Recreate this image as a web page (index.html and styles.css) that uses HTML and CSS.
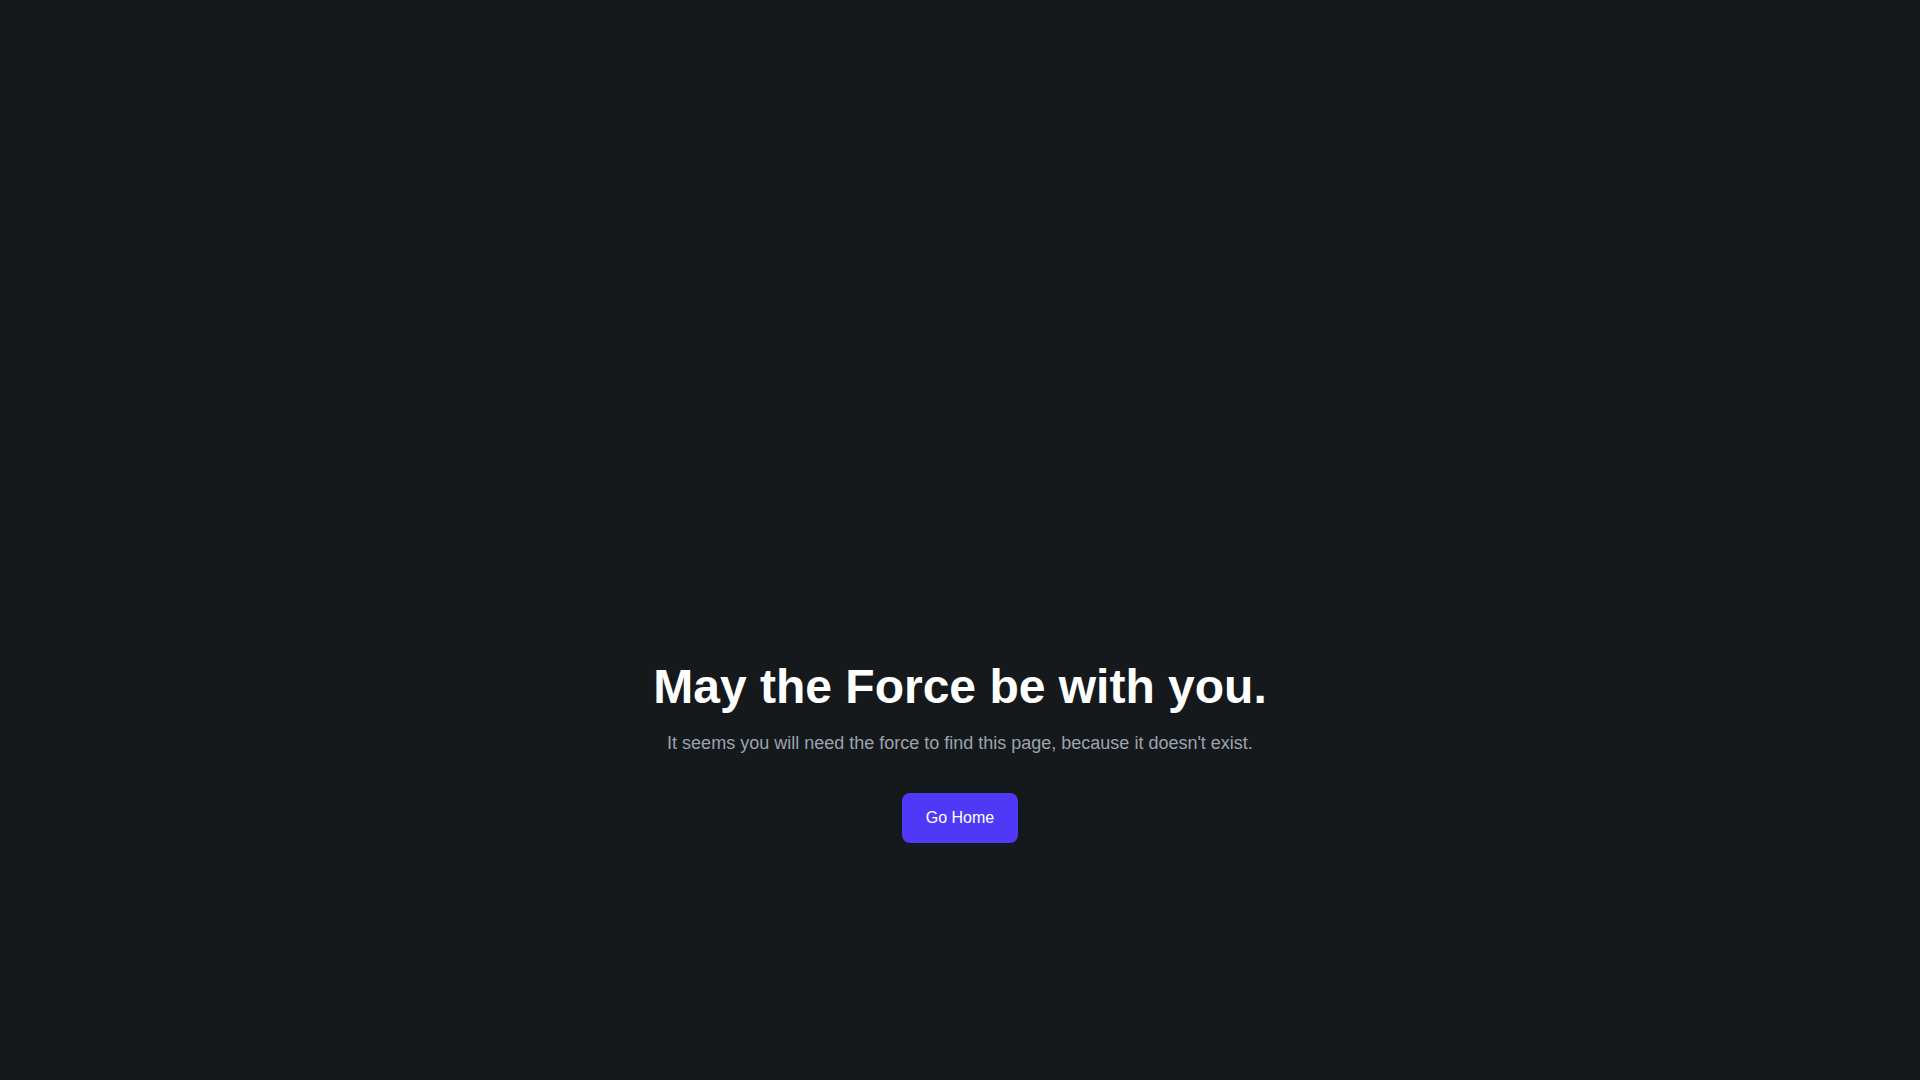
FILE: index.html
```html
<!DOCTYPE html>
<html lang="en">
<head>
<meta charset="utf-8">
<title>Page not found</title>
<link rel="stylesheet" href="styles.css">
</head>
<body>
<main class="page">
  <section class="notfound">
    <h1 class="title">May the Force be with you.</h1>
    <p class="subtitle">It seems you will need the force to find this page, because it doesn't exist.</p>
    <a class="btn" href="#">Go Home</a>
  </section>
</main>
</body>
</html>
```

FILE: styles.css
```css
html, body {
  margin: 0;
  padding: 0;
  background: #16191c;
  height: 100%;
}
body {
  font-family: "Liberation Sans", Arial, sans-serif;
  color: #ffffff;
}
.page {
  min-height: 100vh;
  box-sizing: border-box;
  padding-top: 663px;
  display: flex;
  flex-direction: column;
  align-items: center;
}
.notfound {
  display: flex;
  flex-direction: column;
  align-items: center;
  text-align: center;
}
.title {
  margin: 0;
  font-size: 48px;
  line-height: 48px;
  font-weight: 700;
  color: #ffffff;
}
.subtitle {
  margin: 18px 0 0;
  font-size: 18px;
  line-height: 28px;
  color: #9ca3af;
}
.btn {
  margin-top: 36px;
  display: inline-block;
  padding: 13px 24px;
  font-size: 16px;
  line-height: 24px;
  color: #ffffff;
  background: #4f39f6;
  border-radius: 8px;
  text-decoration: none;
}
```
